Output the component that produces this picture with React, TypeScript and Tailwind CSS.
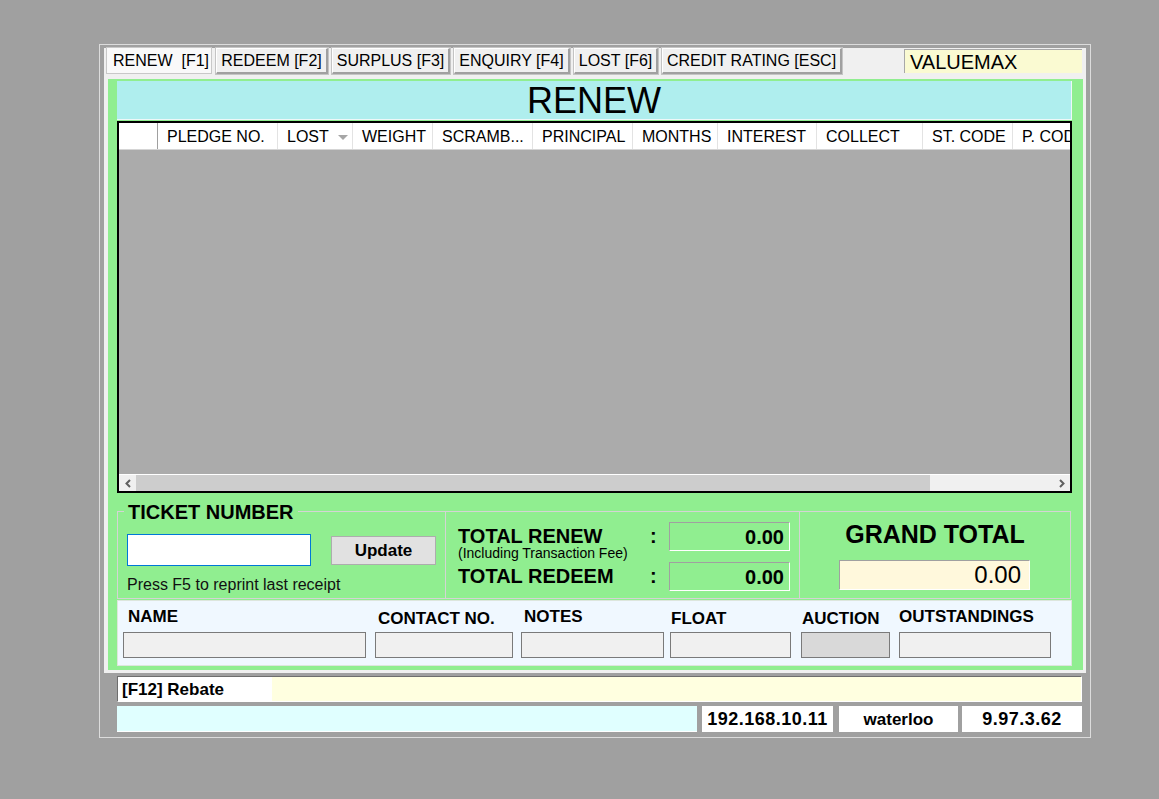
import React from "react";

type Column = {
  label: string;
  width: string;
  dropdown?: boolean;
};

const columns: Array<Column> = [
  { label: "", width: "w-[39px] border-r-[#a0a0a0]" },
  { label: "PLEDGE NO.", width: "w-[120px]" },
  { label: "LOST", width: "w-[75px]", dropdown: true },
  { label: "WEIGHT", width: "w-[80px]" },
  { label: "SCRAMB...", width: "w-[100px]" },
  { label: "PRINCIPAL", width: "w-[100px]" },
  { label: "MONTHS", width: "w-[85px]" },
  { label: "INTEREST", width: "w-[99px]" },
  { label: "COLLECT", width: "w-[106px]" },
  { label: "ST. CODE", width: "w-[90px]" },
  { label: "P. CODE", width: "w-[90px]" },
];

const tabs = [
  { label: "REDEEM [F2]", width: "w-[112px]" },
  { label: "SURPLUS [F3]", width: "w-[118px]" },
  { label: "ENQUIRY [F4]", width: "w-[116px]" },
  { label: "LOST [F6]", width: "w-[84px]" },
  { label: "CREDIT RATING [ESC]", width: "w-[180px]" },
];

// Customer info fields along the bottom of the green panel
const infoFields = [
  { label: "NAME", box: "w-[243px] bg-[#f0f0f0]", wrap: "ml-0", labelStyle: "pl-[5px]" },
  { label: "CONTACT NO.", box: "w-[138px] bg-[#f0f0f0]", wrap: "ml-[9px]", labelStyle: "pl-[3px] pt-[2px]" },
  { label: "NOTES", box: "w-[143px] bg-[#f0f0f0]", wrap: "ml-[8px]", labelStyle: "pl-[3px]" },
  { label: "FLOAT", box: "w-[121px] bg-[#f0f0f0]", wrap: "ml-[6px]", labelStyle: "pl-[1px] pt-[2px]" },
  { label: "AUCTION", box: "w-[89px] bg-[#d9d9d9]", wrap: "ml-[10px]", labelStyle: "pl-[1px] pt-[2px]" },
  { label: "OUTSTANDINGS", box: "w-[152px] bg-[#f0f0f0]", wrap: "ml-[9px]", labelStyle: "" },
];

const App = () => {
  return (
    <div className="h-screen w-full overflow-hidden bg-[#a0a0a0] pt-[44px] pl-[99px] font-['Liberation_Sans',Arial,sans-serif] text-black">
      <div className="w-[992px] h-[694px] border border-[#dcdcdc] pt-[3px] pl-[4px]">
        {/* Tab panel */}
        <div className="w-[982px] h-[625px] bg-[#f0f0f0]">
          <div className="flex items-start h-[26px] pl-[2px] gap-x-[4px]">
            <div className="w-[106px] h-[27px] -mt-[1px] bg-[#f9f9f9] border border-[#c8c8c8] flex items-center pl-[6px] text-[16px] leading-none whitespace-pre">
              RENEW  [F1]
            </div>
            {tabs.map((tab) => (
              <div
                key={tab.label}
                className={`${tab.width} h-[26px] bg-[#f0f0f0] border-t border-l border-t-white border-l-white border-r-2 border-b-2 border-r-[#a0a0a0] border-b-[#a0a0a0] outline outline-1 outline-[#c4c4c4] flex items-center justify-center text-[16px] leading-none whitespace-nowrap`}
              >
                {tab.label}
              </div>
            ))}
            <div className="ml-auto mr-[4px] mt-[1px] w-[178px] h-[24px] bg-[#fafad2] border-t border-l border-[#a8a8a8] flex items-center pl-[5px] text-[20px] leading-none">
              VALUEMAX
            </div>
          </div>

          {/* Green body */}
          <div className="ml-[4px] mt-[5px] w-[975px] h-[591px] bg-[#90ee90] pl-[9px] pt-[2px]">
            <div className="w-[955px] h-[39px] bg-[#afeeee] border-r border-b border-[#eef8f8] flex items-center justify-center pt-[2px] text-[36px] leading-none">
              RENEW
            </div>

            {/* Grid */}
            <div className="mt-[1px] w-[955px] h-[372px] border-2 border-black flex flex-col bg-[#ababab]">
              <div className="flex h-[27px] bg-white border-b border-[#d5d5d5] overflow-hidden shrink-0">
                {columns.map((col, i) => (
                  <div
                    key={i}
                    className={`${col.width} shrink-0 h-full border-r border-[#e3e3e3] flex items-center pl-[9px] pt-[2px] text-[16px] leading-none whitespace-nowrap relative`}
                  >
                    {col.label}
                    {col.dropdown && (
                      <svg
                        className="absolute right-[4px] top-[12px]"
                        width="10"
                        height="5"
                        viewBox="0 0 10 5"
                      >
                        <path d="M0 0h10L5 5z" fill="#a6a6a6" />
                      </svg>
                    )}
                  </div>
                ))}
              </div>
              <div className="flex-1" />
              <div className="h-[17px] shrink-0 bg-[#f0f0f0] border-t border-white flex items-center">
                <div className="w-[17px] h-full flex items-center justify-center">
                  <svg width="6" height="9" viewBox="0 0 6 9">
                    <path d="M5 1L1.5 4.5 5 8" stroke="#606060" strokeWidth="2" fill="none" />
                  </svg>
                </div>
                <div className="w-[794px] h-full bg-[#cdcdcd]" />
                <div className="flex-1" />
                <div className="w-[17px] h-full flex items-center justify-center">
                  <svg width="6" height="9" viewBox="0 0 6 9">
                    <path d="M1 1l3.5 3.5L1 8" stroke="#606060" strokeWidth="2" fill="none" />
                  </svg>
                </div>
              </div>
            </div>

            {/* Ticket + totals */}
            <div className="mt-[18px] flex h-[88px] w-[954px]">
              <div className="relative w-[329px] h-full border border-[#d4d4d4] pl-[9px] pt-[22px]">
                <div className="absolute -top-[10px] left-[6px] bg-[#90ee90] px-[4px] text-[20px] font-bold leading-[20px]">
                  TICKET NUMBER
                </div>
                <div className="flex items-start">
                  <input
                    type="text"
                    className="w-[184px] h-[32px] bg-white border border-[#0078d7] outline-none"
                  />
                  <button className="ml-[20px] mt-[2px] w-[105px] h-[29px] bg-[#e1e1e1] border border-[#adadad] text-[17px] font-bold leading-none">
                    Update
                  </button>
                </div>
                <div className="mt-[10px] text-[16px] leading-[18px] text-[#111]">
                  Press F5 to reprint last receipt
                </div>
              </div>

              <div className="w-[354px] h-full border-t border-b border-r border-[#d4d4d4] pl-[12px] pt-[10px] flex flex-col gap-y-[11px]">
                <div className="flex h-[29px]">
                  <div className="w-[192px] pt-[4px]">
                    <div className="text-[20px] font-bold leading-[20px]">TOTAL RENEW</div>
                    <div className="mt-[1px] text-[14px] leading-[13px] whitespace-nowrap">
                      (Including Transaction Fee)
                    </div>
                  </div>
                  <div className="w-[19px] pt-[4px] text-[20px] font-bold leading-[20px]">:</div>
                  <div className="w-[121px] h-[29px] border-t border-l border-[#a0a0a0] border-r border-b border-r-white border-b-white flex items-center justify-end pr-[5px] text-[20px] font-bold leading-none">
                    0.00
                  </div>
                </div>
                <div className="flex h-[29px]">
                  <div className="w-[192px] pt-[4px] text-[20px] font-bold leading-[20px]">
                    TOTAL REDEEM
                  </div>
                  <div className="w-[19px] pt-[4px] text-[20px] font-bold leading-[20px]">:</div>
                  <div className="w-[121px] h-[29px] border-t border-l border-[#a0a0a0] border-r border-b border-r-white border-b-white flex items-center justify-end pr-[5px] text-[20px] font-bold leading-none">
                    0.00
                  </div>
                </div>
              </div>

              <div className="w-[271px] h-full border-t border-b border-r border-[#d4d4d4] pt-[10px]">
                <div className="text-center text-[25px] font-bold leading-[25px]">GRAND TOTAL</div>
                <div className="ml-[39px] mt-[13px] w-[191px] h-[30px] bg-[#fff8dc] border-t border-l border-[#a0a0a0] border-b border-r border-b-white border-r-white flex items-center justify-end pr-[8px] text-[24px] leading-none">
                  0.00
                </div>
              </div>
            </div>

            {/* Customer info */}
            <div className="mt-[1px] w-[955px] h-[66px] bg-[#f0f8ff] border border-[#dde6dd] flex pl-[5px] pt-[7px]">
              {infoFields.map((field) => (
                <div key={field.label} className={`flex flex-col ${field.wrap}`}>
                  <div className={`h-[24px] text-[17px] font-bold leading-[17px] whitespace-nowrap ${field.labelStyle}`}>
                    {field.label}
                  </div>
                  <div className={`${field.box} h-[26px] border border-[#7a7a7a]`} />
                </div>
              ))}
            </div>
          </div>
        </div>

        {/* Rebate */}
        <div className="ml-[13px] mt-[3px] w-[965px] h-[26px] flex border-t border-l border-[#6e6e6e] border-b border-r border-b-white border-r-white">
          <div className="w-[154px] h-full bg-white flex items-center pl-[4px] text-[17px] font-bold leading-none">
            [F12] Rebate
          </div>
          <div className="flex-1 h-full bg-[#ffffe0]" />
        </div>

        {/* Status bar */}
        <div className="ml-[13px] mt-[4px] w-[966px] h-[26px] flex">
          <div className="w-[580px] h-full bg-[#e0ffff] border-b border-white" />
          <div className="ml-[5px] w-[131px] h-full bg-white flex items-center justify-center text-[18px] font-bold leading-none tracking-[0.5px]">
            192.168.10.11
          </div>
          <div className="ml-[6px] w-[119px] h-full bg-white flex items-center justify-center text-[17px] font-bold leading-none">
            waterloo
          </div>
          <div className="ml-[4px] w-[120px] h-full bg-white flex items-center justify-center text-[18px] font-bold leading-none tracking-[0.5px]">
            9.97.3.62
          </div>
        </div>
      </div>
    </div>
  );
};

export default App;
